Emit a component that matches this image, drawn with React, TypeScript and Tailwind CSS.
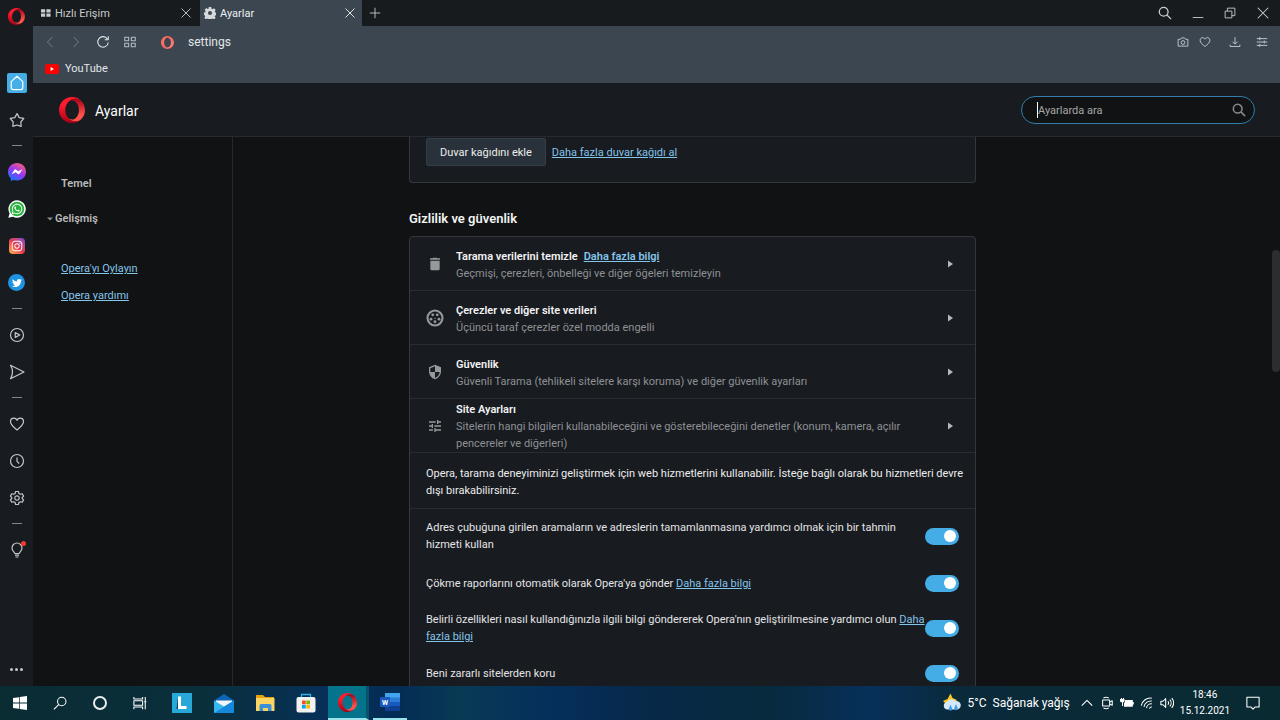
import type { ReactNode } from "react";
import { FaInstagram, FaTwitter, FaWhatsapp } from "react-icons/fa";

type IconProps = { className?: string };

const OperaLogo = ({ className, id, from = "#ff1b2d", to = "#a70014", inner = "#ff5149" }: IconProps & { id: string; from?: string; to?: string; inner?: string }) => (
  <svg viewBox="0 0 24 24" className={className} aria-hidden="true">
    <defs>
      <linearGradient id={id + "-a"} x1="0" y1="0" x2="0" y2="1">
        <stop offset="0.3" stopColor={from} />
        <stop offset="1" stopColor={to} />
      </linearGradient>
      <linearGradient id={id + "-b"} x1="0" y1="0" x2="0" y2="1">
        <stop offset="0" stopColor={to} />
        <stop offset="0.7" stopColor={inner} />
      </linearGradient>
    </defs>
    <path
      fill={`url(#${id}-a)`}
      d="M8.05 18.76C6.72 17.19 5.86 14.88 5.8 12.28v-.56c.06-2.6.92-4.91 2.25-6.48C9.77 3 12.32 1.6 15.17 1.6c1.75 0 3.4.53 4.8 1.44A11.96 11.96 0 0 0 12 0C5.37 0 0 5.37 0 12c0 6.44 5.07 11.7 11.43 12 3.28.14 6.3-1.06 8.54-3.04a8.86 8.86 0 0 1-4.8 1.44c-2.85 0-5.4-1.4-7.12-3.64z"
    />
    <path
      fill={`url(#${id}-b)`}
      d="M8.05 5.24c1.1-1.3 2.52-2.08 4.07-2.08 3.48 0 6.3 3.96 6.3 8.84s-2.82 8.84-6.3 8.84c-1.55 0-2.97-.78-4.07-2.08 1.72 2.24 4.27 3.64 7.12 3.64 1.75 0 3.4-.53 4.8-1.44A11.97 11.97 0 0 0 24 12c0-3.56-1.55-6.76-4.03-8.96a8.86 8.86 0 0 0-4.8-1.44c-2.85 0-5.4 1.4-7.12 3.64z"
    />
  </svg>
);

const Line = ({ className, d, w = 1.2 }: IconProps & { d: string; w?: number }) => (
  <svg viewBox="0 0 16 16" className={className ?? "size-4"} fill="none" stroke="currentColor" strokeWidth={w} strokeLinejoin="round" aria-hidden="true">
    <path d={d} />
  </svg>
);

const paths = {
  home: "M8 1.2 13.8 6.6V12.6A2 2 0 0 1 11.8 14.6H4.2A2 2 0 0 1 2.2 12.6V6.6Z",
  star: "M8 1.6 10.2 5.6 14.8 6.4 11.8 10 12.2 14.4 8 13 3.8 14.4 4.2 10 1.2 6.4 5.8 5.6Z",
  play: "M8 1.5A6.5 6.5 0 1 1 8 14.5A6.5 6.5 0 1 1 8 1.5ZM6.2 5.6 10.8 8 6.2 10.4Z",
  send: "M1.5 1.3 15 8 1.5 14.7C4 10.5 4 5.5 1.5 1.3Z",
  heart: "M8 14C4.5 11.2 1.5 8.8 1.5 5.8 1.5 3.6 3.1 2.2 4.9 2.2 6.4 2.2 7.5 3.1 8 4.3 8.5 3.1 9.6 2.2 11.1 2.2 12.9 2.2 14.5 3.6 14.5 5.8 14.5 8.8 11.5 11.2 8 14Z",
  clock: "M8 1.5A6.5 6.5 0 1 1 8 14.5A6.5 6.5 0 1 1 8 1.5ZM8 4.5V8.3L10.2 10.5",
  gear: "M6.6 1.5H9.4L9.9 3.5 11.3 4.3 13.2 3.7 14.6 6.1 13.2 7.5V8.5L14.6 9.9 13.2 12.3 11.3 11.7 9.9 12.5 9.4 14.5H6.6L6.1 12.5 4.7 11.7 2.8 12.3 1.4 9.9 2.8 8.5V7.5L1.4 6.1 2.8 3.7 4.7 4.3 6.1 3.5ZM8 5.8A2.2 2.2 0 1 1 8 10.2A2.2 2.2 0 1 1 8 5.8Z",
  bulb: "M5.8 11.5C5.8 10 3 9.2 3 6A5 5 0 0 1 13 6C13 9.2 10.2 10 10.2 11.5ZM6 13.2H10M6.5 15H9.5",
  close: "M2 2 14 14M14 2 2 14",
  plus: "M8 2V14M2 8H14",
  back: "M10.5 2.5 5 8 10.5 13.5",
  forward: "M5.5 2.5 11 8 5.5 13.5",
  reload: "M13 4.5A6 6 0 1 0 14 8.5M14 1.5V5.5H10",
  grid: "M2 2.5H6.5V6.5H2ZM9.5 2.5H14V6.5H9.5ZM2 9.5H6.5V13.5H2ZM9.5 9.5H14V13.5H9.5Z",
  camera: "M1.5 4.5H4.5L6 2.5H10L11.5 4.5H14.5V13.5H1.5ZM8 6.2A2.5 2.5 0 1 1 8 11.2A2.5 2.5 0 1 1 8 6.2Z",
  download: "M8 1.5V10.5M4.5 7.5 8 11 11.5 7.5M1.5 11.5V14H14.5V11.5",
  sliders: "M1 3.5H15M1 8H15M1 12.5H15M5 1.5V5.5M11 6V10M5 10.5V14.5",
  search: "M6.5 1.5A5 5 0 1 1 6.5 11.5A5 5 0 1 1 6.5 1.5ZM10.2 10.2 15 15",
  taskSearch: "M10 1.5A4.8 4.8 0 1 1 10 11.1A4.8 4.8 0 1 1 10 1.5ZM6.5 9.8 1 15.3",
  minimize: "M1 14H15",
  restore: "M1.5 5.5H10.5V14.5H1.5ZM4.5 5.5V1.5H14.5V11.5H10.5",
};

const RailButton = ({ label, children }: { label: string; children: ReactNode }) => (
  <button type="button" aria-label={label} className="relative flex h-[37px] w-full shrink-0 items-center justify-center">
    {children}
  </button>
);

const Divider = () => <span className="my-[7px] h-px w-2.5 shrink-0 bg-[#7f878d]" />;

const Messenger = () => (
  <svg viewBox="0 0 24 24" className="size-[18px]" aria-hidden="true">
    <defs>
      <linearGradient id="msg" x1="0.2" y1="1" x2="0.8" y2="0">
        <stop offset="0" stopColor="#0a7cff" />
        <stop offset="0.5" stopColor="#9a36f5" />
        <stop offset="1" stopColor="#ff5f6d" />
      </linearGradient>
    </defs>
    <path fill="url(#msg)" d="M12 0C5.24 0 0 4.95 0 11.64c0 3.5 1.43 6.52 3.77 8.61v3.7l3.6-1.2c1.44.4 2.97.52 4.63.52 6.76 0 12-4.94 12-11.63S18.76 0 12 0z" />
    <path fill="#fff" d="m4.8 15 3.5-5.6a1.8 1.8 0 0 1 2.6-.5l2.8 2.1 5.5-2.6-3.5 5.6a1.8 1.8 0 0 1-2.6.5l-2.8-2.1z" />
  </svg>
);

const WhatsApp = () => (
  <span className="relative flex size-[18px] items-center justify-center">
    <svg viewBox="0 0 18 18" className="absolute size-[18px]" aria-hidden="true">
      <path fill="#fff" d="M9 0.3A8.7 8.7 0 1 1 5 16.7L0.3 17.8 1.6 13.4A8.7 8.7 0 0 1 9 0.3z" />
      <circle cx="9" cy="9" r="7.3" fill="#29b43f" />
    </svg>
    <FaWhatsapp className="relative size-3 text-white" />
  </span>
);

const Rail = () => (
  <aside className="flex w-[33px] shrink-0 flex-col items-center bg-[#181b20] text-[#c5c8ca]">
    <button type="button" aria-label="Opera" className="mt-2 mb-12">
      <OperaLogo id="rail" className="size-[17px]" />
    </button>
    <button type="button" aria-label="Hızlı Erişim" className="flex size-5 shrink-0 items-center justify-center rounded-xs bg-[#46aee6] text-white">
      <Line d={paths.home} />
    </button>
    <div className="mt-2 flex w-full flex-col items-center">
      <RailButton label="Sabitlenenler"><Line d={paths.star} /></RailButton>
      <Divider />
      <RailButton label="Messenger"><Messenger /></RailButton>
      <RailButton label="WhatsApp"><WhatsApp /></RailButton>
      <RailButton label="Instagram">
        <span className="flex size-4 items-center justify-center rounded-sm bg-linear-to-tr from-[#fdb347] via-[#e8344f] to-[#7b3fd0]">
          <FaInstagram className="size-3 text-white" />
        </span>
      </RailButton>
      <RailButton label="Twitter">
        <span className="flex size-[17px] items-center justify-center rounded-full bg-[#1c93e3]">
          <FaTwitter className="size-2.5 text-white" />
        </span>
      </RailButton>
      <Divider />
      <RailButton label="Oynatıcı"><Line d={paths.play} /></RailButton>
      <RailButton label="Akışım"><Line d={paths.send} /></RailButton>
      <Divider />
      <RailButton label="Yer imleri"><Line d={paths.heart} /></RailButton>
      <RailButton label="Geçmiş"><Line d={paths.clock} /></RailButton>
      <RailButton label="Ayarlar"><Line d={paths.gear} /></RailButton>
      <Divider />
      <RailButton label="İpuçları">
        <Line d={paths.bulb} />
        <span className="absolute top-2.5 right-[7px] size-[5px] rounded-full bg-[#f2392c]" />
      </RailButton>
    </div>
    <button type="button" aria-label="Daha fazla" className="mt-auto mb-[15px] flex gap-0.5">
      <i className="size-[3px] rounded-full bg-current" />
      <i className="size-[3px] rounded-full bg-current" />
      <i className="size-[3px] rounded-full bg-current" />
    </button>
  </aside>
);

const TabBar = () => (
  <div className="flex h-[26px] shrink-0 items-stretch bg-[#181b1e] text-[11px] text-[#c9cccd]">
    <div className="flex w-[167px] items-center pr-2 pl-2">
      <svg viewBox="0 0 12 9" className="mr-1 h-2 w-2.5" fill="currentColor" aria-hidden="true">
        <path d="M0 0h5v3.8H0zM6.5 0h5v3.8h-5zM0 5.2h5V9H0zM6.5 5.2h5V9h-5z" />
      </svg>
      <span className="grow pt-0.5">Hızlı Erişim</span>
      <button type="button" aria-label="Sekmeyi kapat"><Line className="size-3" d={paths.close} /></button>
    </div>
    <div className="flex w-[162px] items-center bg-[#3b4651] pr-1.5 pl-1 text-[#eef0f1]">
      <svg viewBox="0 0 24 24" className="mr-1 size-3" fill="#d5d9dc" aria-hidden="true">
        <path fillRule="evenodd" d="M9.5 0h5l.6 3.4 2 .9 2.9-1.9 3.4 3.4-1.9 2.9.9 2 1.6.6v5l-1.8.6-.8 1.9 2 2.9-3.5 3.4-2.9-1.9-1.9.8-.6 3.1h-5l-.6-3.2-1.9-.8-2.9 2L.6 21.6l2-2.8-.9-2L0 16v-5l2.4-.6.8-1.9-1.9-2.9L4.8 2.2l2.8 1.9 1.4-.6zM12 8a4 4 0 1 0 0 8 4 4 0 0 0 0-8z" />
      </svg>
      <span className="grow pt-0.5">Ayarlar</span>
      <button type="button" aria-label="Sekmeyi kapat"><Line className="size-3" d={paths.close} /></button>
    </div>
    <button type="button" aria-label="Yeni sekme" className="px-1.5"><Line className="size-3.5" w={1} d={paths.plus} /></button>
    <div className="ml-auto flex items-center gap-5 pr-2.5">
      <button type="button" aria-label="Sekmelerde ara"><Line className="size-3.5" w={1.5} d={paths.search} /></button>
      <button type="button" aria-label="Simge durumuna küçült"><Line className="size-3" d={paths.minimize} /></button>
      <button type="button" aria-label="Geri yükle"><Line className="size-3" d={paths.restore} /></button>
      <button type="button" aria-label="Kapat"><Line className="size-3.5" d={paths.close} /></button>
    </div>
  </div>
);

const Toolbar = () => (
  <div className="h-[57px] shrink-0 bg-[#3b4651] text-[#e3e6e8]">
    <div className="flex h-8 items-center pr-3 pl-2.5">
      <button type="button" aria-label="Geri" className="mr-3 text-[#66717b]"><Line className="size-3.5" d={paths.back} /></button>
      <button type="button" aria-label="İleri" className="mr-[13px] text-[#66717b]"><Line className="size-3.5" d={paths.forward} /></button>
      <button type="button" aria-label="Yenile" className="mr-[13px]"><Line className="size-3.5" d={paths.reload} /></button>
      <button type="button" aria-label="Hızlı Erişim" className="mr-6 text-[#b6bdc3]"><Line className="size-3.5" d={paths.grid} /></button>
      <OperaLogo id="address" from="#ff6d66" to="#f5655f" inner="#ff7a70" className="size-[13px]" />
      <span className="ml-3.5 grow text-xs">settings</span>
      <div className="flex items-center text-[#c9ced2]">
        <button type="button" aria-label="Anlık görüntü" className="mr-2.5"><Line className="size-3" d={paths.camera} /></button>
        <button type="button" aria-label="Yer imi ekle" className="mr-[18px]"><Line className="size-3" d={paths.heart} /></button>
        <button type="button" aria-label="İndirilenler" className="mr-[15px]"><Line className="size-3" d={paths.download} /></button>
        <button type="button" aria-label="Kolay kurulum"><Line className="size-3" d={paths.sliders} /></button>
      </div>
    </div>
    <a href="#youtube" className="flex w-fit items-center gap-1.5 pt-0.5 pl-3 text-[11px] leading-[18px]">
      <svg viewBox="0 0 14 10" className="h-2.5 w-3.5" aria-hidden="true">
        <rect width="14" height="10" rx="2.5" fill="#f00" />
        <path fill="#fff" d="M5.6 3 9 5 5.6 7z" />
      </svg>
      YouTube
    </a>
  </div>
);

const SettingsHeader = () => (
  <header className="flex h-[54px] shrink-0 items-center border-b border-[#272b31] bg-[#181b20] pr-[25px] pl-[26px]">
    <OperaLogo id="header" className="size-[26px]" />
    <h1 className="ml-2.5 pt-0.5 text-sm text-white">Ayarlar</h1>
    <label className="ml-auto flex h-7 w-[234px] items-center rounded-full border border-[#317ea8] bg-[#111213] pr-2 pl-[15px]">
      <span className="h-4 w-px bg-white" />
      <input
        type="search"
        aria-label="Ayarlarda ara"
        placeholder="Ayarlarda ara"
        className="min-w-0 grow bg-transparent pt-1 text-[11px] text-white outline-none placeholder:text-[#a5a7a9]"
      />
      <Line className="size-3.5 text-[#85888b]" w={1.8} d={paths.search} />
    </label>
  </header>
);

const SideNav = () => (
  <nav className="w-[200px] shrink-0 border-r border-[#24272b] pt-[38px] text-[11px] leading-[18px]">
    <a href="#temel" className="block pl-7 font-semibold text-[#b9babb]">Temel</a>
    <a href="#gelismis" className="mt-[17px] flex items-center gap-0.5 pl-3.5 font-semibold text-[#b9babb]">
      <svg viewBox="0 0 8 4" className="h-1 w-1.5" fill="#8b8d8f" aria-hidden="true"><path d="M0 0h8L4 4z" /></svg>
      Gelişmiş
    </a>
    <a href="#oyla" className="mt-8 block pl-7 text-[#84c5ea] underline">Opera'yı Oylayın</a>
    <a href="#yardim" className="mt-[9px] block pl-7 text-[#84c5ea] underline">Opera yardımı</a>
  </nav>
);

const TrashIcon = () => (
  <svg viewBox="0 0 24 24" className="size-4" fill="currentColor" aria-hidden="true">
    <path d="M5 7h14v12.5a2 2 0 0 1-2 2H7a2 2 0 0 1-2-2zM19.5 3.5h-4L14.5 2.5h-5l-1 1h-4v2h15z" />
  </svg>
);

const CookieIcon = () => (
  <svg viewBox="0 0 24 24" className="size-[18px]" fill="currentColor" aria-hidden="true">
    <circle cx="12" cy="12" r="10" fill="none" stroke="currentColor" strokeWidth="2.8" />
    <circle cx="9" cy="7.8" r="1.9" />
    <circle cx="15" cy="7.8" r="1.9" />
    <circle cx="6.7" cy="13.5" r="1.9" />
    <circle cx="12" cy="17" r="1.9" />
    <circle cx="17.3" cy="13.5" r="1.9" />
    <circle cx="12" cy="12.3" r="0.9" />
  </svg>
);

const ShieldIcon = () => (
  <svg viewBox="0 0 24 24" className="size-4" fill="currentColor" aria-hidden="true">
    <path d="M12 1 3 5v6c0 5.55 3.84 10.74 9 12 5.16-1.26 9-6.45 9-12V5zm0 10.99h7c-.53 4.12-3.28 7.79-7 8.94V12H5V6.3l7-3.11z" />
  </svg>
);

const TuneIcon = () => (
  <svg viewBox="0 0 24 24" className="size-4" fill="currentColor" aria-hidden="true">
    <path d="M3 17v2h6v-2zM3 5v2h10V5zm10 16v-2h8v-2h-8v-2h-2v6zM7 9v2H3v2h4v2h2V9zm14 4v-2H11v2zm-6-4h2V7h4V5h-4V3h-2z" />
  </svg>
);

const rows = [
  { icon: <TrashIcon />, title: "Tarama verilerini temizle", link: "Daha fazla bilgi", text: "Geçmişi, çerezleri, önbelleği ve diğer öğeleri temizleyin" },
  { icon: <CookieIcon />, title: "Çerezler ve diğer site verileri", text: "Üçüncü taraf çerezler özel modda engelli" },
  { icon: <ShieldIcon />, title: "Güvenlik", text: "Güvenli Tarama (tehlikeli sitelere karşı koruma) ve diğer güvenlik ayarları" },
  { icon: <TuneIcon />, title: "Site Ayarları", text: "Sitelerin hangi bilgileri kullanabileceğini ve gösterebileceğini denetler (konum, kamera, açılır pencereler ve diğerleri)" },
];

const toggles = [
  { id: "tahmin", text: "Adres çubuğuna girilen aramaların ve adreslerin tamamlanmasına yardımcı olmak için bir tahmin hizmeti kullan" },
  { id: "cokme", text: "Çökme raporlarını otomatik olarak Opera'ya gönder", link: "Daha fazla bilgi" },
  { id: "ozellik", text: "Belirli özellikleri nasıl kullandığınızla ilgili bilgi göndererek Opera'nın geliştirilmesine yardımcı olun", link: "Daha fazla bilgi" },
  { id: "zararli", text: "Beni zararlı sitelerden koru" },
];

const PrivacyCard = () => (
  <section className="mt-2 rounded-sm border border-[#34383d] bg-[#181b20]">
    {rows.map((row) => (
      <div key={row.title} className="flex h-[54px] items-center border-b border-[#292d32] pr-[22px] pl-4">
        <span className="mr-3 flex w-[18px] shrink-0 justify-center text-[#96999c]">{row.icon}</span>
        <div className="grow pt-0.5 pr-10">
          <h3 className="font-semibold text-[#f3f3f4]">
            {row.title}
            {row.link && <a href="#bilgi" className="ml-1.5 text-[#84c5ea] underline">{row.link}</a>}
          </h3>
          <p className="text-[#8e9194]">{row.text}</p>
        </div>
        <button type="button" aria-label={row.title}>
          <svg viewBox="0 0 5 8" className="h-2 w-[5px]" fill="#b5b7b9" aria-hidden="true"><path d="M0 0.5 5 4 0 7.5z" /></svg>
        </button>
      </div>
    ))}
    <p className="border-b border-[#292d32] pt-3 pr-2 pb-[9px] pl-4 text-[#eceded]">
      Opera, tarama deneyiminizi geliştirmek için web hizmetlerini kullanabilir. İsteğe bağlı olarak bu hizmetleri devre dışı bırakabilirsiniz.
    </p>
    <div>
      {toggles.map((item) => (
        <div key={item.id} className="flex min-h-10 items-center justify-between px-4 py-2 text-[#e4e5e6] first:py-2.5">
          <div>
            <label htmlFor={item.id}>{item.text}</label>
            {item.link && <> <a href="#bilgi" className="text-[#84c5ea] underline">{item.link}</a></>}
          </div>
          <input
            id={item.id}
            type="checkbox"
            defaultChecked
            className="flex h-[17px] w-[34px] shrink-0 appearance-none items-center rounded-full bg-[#59636b] px-[3px] before:size-3 before:rounded-full before:bg-white checked:justify-end checked:bg-[#44ade6]"
          />
        </div>
      ))}
    </div>
  </section>
);

const Taskbar = () => (
  <footer className="z-10 flex h-[34px] shrink-0 items-stretch bg-[linear-gradient(90deg,#0a2c33_0%,#0a2f3c_16%,#06305a_26%,#042c55_31%,#083a54_36%,#052f5c_43%,#07294a_50%,#072a3d_60%,#07305a_68%,#0a2a3a_75%,#0a2a32_100%)] text-white">
    <button type="button" aria-label="Başlat" className="flex w-10 items-center justify-center">
      <svg viewBox="0 0 14 14" className="size-3.5" fill="currentColor" aria-hidden="true">
        <path d="M0 2 6 1.2V6.6H0zM6.7 1.1 14 0V6.6H6.7zM0 7.4H6V12.8L0 12zM6.7 7.4H14V14L6.7 12.9z" />
      </svg>
    </button>
    <button type="button" aria-label="Ara" className="flex w-10 items-center justify-center"><Line className="size-3.5" d={paths.taskSearch} /></button>
    <button type="button" aria-label="Cortana" className="flex w-10 items-center justify-center">
      <span className="size-3.5 rounded-full border-2 border-[#e8eded]" />
    </button>
    <button type="button" aria-label="Görev Görünümü" className="flex w-10 items-center justify-center">
      <Line className="size-3.5" d="M1 1V3.5H11V1M1 15V12.5H11V15M1 5.5H11V10.5H1ZM14 1V15M12.8 6.5H15.2" />
    </button>
    <button type="button" aria-label="L" className="flex w-11 items-center justify-center">
      <svg viewBox="0 0 20 20" className="size-5" aria-hidden="true">
        <rect width="20" height="20" fill="#28a8d8" />
        <path d="M6 4 4.5 16 9 16z" fill="#0f3d6b" />
        <path d="M7.5 3.5V14.5H14.5" fill="none" stroke="#fff" strokeWidth="3" />
      </svg>
    </button>
    <button type="button" aria-label="Posta" className="flex w-10 items-center justify-center">
      <svg viewBox="0 0 20 19" className="h-[19px] w-5" aria-hidden="true">
        <path d="M0 6.5 10 0 20 6.5V9H0z" fill="#0f64b8" />
        <path d="M2 6.5H18V10L10 14 2 10z" fill="#f3f6f9" />
        <path d="M0 6.5 10 12.5 20 6.5V19H0z" fill="#35b8f0" />
        <path d="M0 19 20 6.5V19z" fill="#1688dc" />
      </svg>
    </button>
    <button type="button" aria-label="Dosya Gezgini" className="flex w-[42px] items-center justify-center">
      <svg viewBox="0 0 19 16" className="h-4 w-[19px]" aria-hidden="true">
        <path d="M0 0H7L9 2H18V8H0z" fill="#e5a313" />
        <rect y="3" width="18.5" height="13" rx="0.5" fill="#fcd462" />
        <path d="M3.5 16V10.5Q3.5 9 5 9H14Q15.5 9 15.5 10.5V16H12V13H7V16z" fill="#3b8fd6" />
      </svg>
    </button>
    <button type="button" aria-label="Microsoft Store" className="flex w-10 items-center justify-center">
      <svg viewBox="0 0 20 20" className="size-5" aria-hidden="true">
        <path d="M5.5 5V1.5H14.5V5" fill="none" stroke="#2fb4ea" strokeWidth="1.3" />
        <rect x="0.5" y="4" width="19" height="15.5" rx="2" fill="#f1f1f1" />
        <path d="M6 7.5h3.7v3.7H6z" fill="#f25022" />
        <path d="M10.3 7.5H14v3.7h-3.7z" fill="#7fba00" />
        <path d="M6 11.8h3.7v3.7H6z" fill="#00a4ef" />
        <path d="M10.3 11.8H14v3.7h-3.7z" fill="#ffb900" />
      </svg>
    </button>
    <button type="button" aria-label="Opera" className="mr-1 ml-0.5 flex w-[41px] items-center justify-center border-r-3 border-b-2 border-r-[#07536a] border-b-[#9be3ea] bg-[#04748c]">
      <OperaLogo id="taskbar" className="size-[19px]" />
    </button>
    <button type="button" aria-label="Word" className="flex w-[34px] items-center justify-center border-b-2 border-[#9be3ea]">
      <svg viewBox="0 0 20 18" className="h-[18px] w-5" aria-hidden="true">
        <path d="M5 0H20V5H5z" fill="#41a5ee" />
        <path d="M5 4.5H20V9H5z" fill="#2b7cd3" />
        <path d="M5 9H20V13.5H5z" fill="#185abd" />
        <path d="M5 13.5H20V18H5z" fill="#103f91" />
        <rect y="4" width="10" height="10" rx="0.8" fill="#185abd" />
        <text x="5" y="11.5" textAnchor="middle" fontSize="7" fontWeight="700" fill="#fff">W</text>
      </svg>
    </button>
    <div className="ml-auto flex items-center pr-5 text-xs">
      <svg viewBox="0 0 20 20" className="size-5" aria-hidden="true">
        <path d="M8.5 0.5 10.5 5 15 7 11 12H5L1 8 5.5 6z" fill="#f9c51c" />
        <path d="M5 16.5A3.8 3.8 0 0 1 5 9 5 5 0 0 1 13.5 8.2 4.2 4.2 0 1 1 15.5 16.5z" fill="#d3e8fa" />
        <path d="M8.5 11.5 7 15.5A1.6 1.6 0 1 0 10 15.5zM14 11 12.4 15A1.7 1.7 0 1 0 15.6 15z" fill="#3b9be8" />
      </svg>
      <span className="ml-1.5">5°C</span>
      <span className="ml-1.5">Sağanak yağış</span>
      <button type="button" aria-label="Gizli simgeler" className="ml-2.5"><Line className="size-3.5" d="M2 11 8 5 14 11" /></button>
      <Line className="ml-1.5 size-3.5" d="M3 4.5H11V11.5H3ZM11 7 14 5.5V10.5L11 9M4 2.2C6 1.2 8 1.2 10 2.2M4 13.8C6 14.8 8 14.8 10 13.8" />
      <svg viewBox="0 0 14 10" className="ml-1.5 h-2.5 w-3.5" fill="currentColor" aria-hidden="true">
        <path fillRule="evenodd" d="M0 1H1V0H2V1H3V0H4V1H4.5V3.5L3 4.5V8H2V4.5L0 3.5zM5 2H12.8V4H13.8V6.5H12.8V8.7H4V5L5 4z" />
      </svg>
      <Line className="ml-1.5 size-3.5" d="M1.5 11A10.5 10.5 0 0 1 13.5 2.5M4.5 12.5A8 8 0 0 1 13.5 5.8M7.5 13.8A5.5 5.5 0 0 1 13.5 9M10.8 14.5A3 3 0 0 1 13.5 12.3" />
      <Line className="ml-1.5 size-3.5" d="M1 6H3.5L6.5 3V13L3.5 10H1ZM9 6A3 3 0 0 1 9 10M11.2 4.2A5.5 5.5 0 0 1 11.2 11.8M13.4 2.5A8 8 0 0 1 13.4 13.5" />
      <div className="ml-1.5 text-center text-[10px] leading-4">
        <div>18:46</div>
        <div>15.12.2021</div>
      </div>
      <button type="button" aria-label="Bildirimler" className="ml-4"><Line className="size-3.5" d="M1 1.5H15V12.5H10.5L8 15 5.5 12.5H1Z" /></button>
    </div>
  </footer>
);

export default function App() {
  return (
    <div className="flex h-screen flex-col overflow-hidden bg-[#111213] font-['Roboto','Open_Sans',sans-serif]">
      <div className="flex min-h-0 grow">
        <Rail />
        <div className="flex min-w-0 grow flex-col">
          <TabBar />
          <Toolbar />
          <SettingsHeader />
          <div className="flex min-h-0 grow">
            <SideNav />
            <main className="flex min-w-0 grow justify-between overflow-hidden">
              <div className="ml-44 w-full max-w-[567px] text-[11px] leading-[17px]">
                <section className="flex items-start gap-1.5 rounded-b-sm border border-t-0 border-[#34383d] bg-[#181b20] px-4 pt-px pb-4">
                  <button type="button" className="h-7 rounded-xs border border-[#343e46] bg-[#29323a] px-[13px] text-[#eceded]">Duvar kağıdını ekle</button>
                  <a href="#duvar" className="pt-1.5 text-[#84c5ea] underline">Daha fazla duvar kağıdı al</a>
                </section>
                <h2 className="mt-[27px] text-[13px] leading-[18px] font-semibold text-[#f3f3f4]">Gizlilik ve güvenlik</h2>
                <PrivacyCard />
              </div>
              <div className="mt-[113px] h-[122px] w-2 shrink-0 rounded-full bg-[#2b2e31]" />
            </main>
          </div>
        </div>
      </div>
      <Taskbar />
    </div>
  );
}
